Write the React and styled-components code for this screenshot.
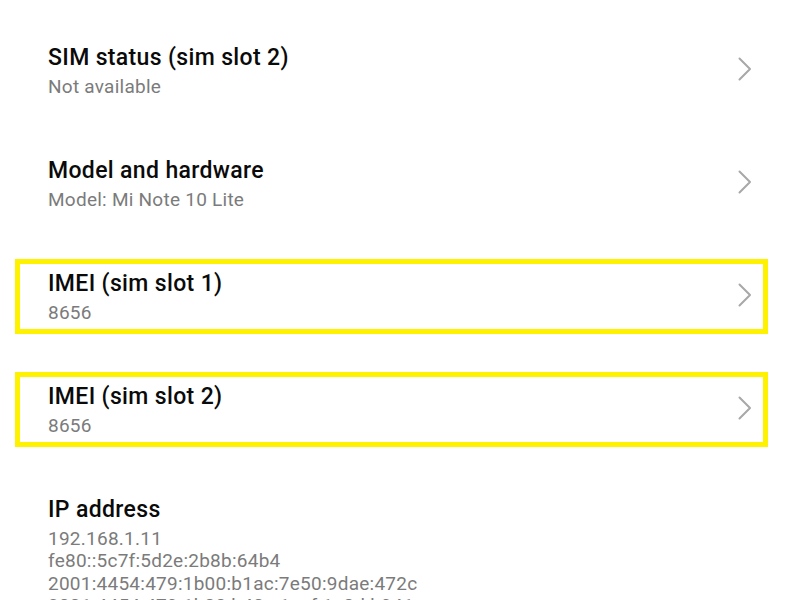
import React from 'react';
import styled, { createGlobalStyle } from 'styled-components';

const GlobalStyle = createGlobalStyle`
  html, body {
    margin: 0;
    padding: 0;
    background: #ffffff;
    font-family: Roboto, 'Noto Sans', Arial, sans-serif;
    -webkit-font-smoothing: antialiased;
  }
`;

const items = [
  { title: 'SIM status (sim slot 2)', lines: ['Not available'], arrow: true },
  { title: 'Model and hardware', lines: ['Model: Mi Note 10 Lite'], arrow: true },
  { title: 'IMEI (sim slot 1)', lines: ['8656'], arrow: true, marked: true },
  { title: 'IMEI (sim slot 2)', lines: ['8656'], arrow: true, marked: true },
  {
    title: 'IP address',
    lines: [
      '192.168.1.11',
      'fe80::5c7f:5d2e:2b8b:64b4',
      '2001:4454:479:1b00:b1ac:7e50:9dae:472c',
      '2001:4454:479:1b00:b40c:1ecf:1c0d:b941',
    ],
  },
];

const Chevron = () => (
  <svg width='14' height='24' viewBox='0 0 14 24'>
    <polyline
      points='1.5,1.5 12,12 1.5,22.5'
      fill='none'
      stroke='#a8a8a8'
      strokeWidth='2'
      strokeLinecap='round'
      strokeLinejoin='round'
    />
  </svg>
);

const App = () => {
  return (
    <>
      <GlobalStyle />
      <List>
        {items.map((item) => (
          <Row key={item.title}>
            <Item $marked={item.marked}>
              <Text>
                <Title>{item.title}</Title>
                <Sub>
                  {item.lines.map((line) => (
                    <div key={line}>{line}</div>
                  ))}
                </Sub>
              </Text>
              {item.arrow && (
                <Arrow>
                  <Chevron />
                </Arrow>
              )}
            </Item>
          </Row>
        ))}
      </List>
    </>
  );
};

const List = styled.div`
  width: 800px;
  height: 600px;
  overflow: hidden;
  padding-top: 14px;
  box-sizing: border-box;
`;

const Row = styled.div`
  padding: 19px 32px 19px 15px;
`;

const Item = styled.div`
  display: flex;
  align-items: center;
  border: 5px solid ${(p) => (p.$marked ? '#fff200' : 'transparent')};
  padding: 6px 11px 5px 28px;
`;

const Text = styled.div`
  flex: 1;
  min-width: 0;
`;

const Title = styled.div`
  font-size: 23px;
  font-weight: 500;
  line-height: 28px;
  letter-spacing: 0.35px;
  color: #0a0a0a;
`;

const Sub = styled.div`
  margin-top: 3.5px;
  font-size: 19px;
  line-height: 22.5px;
  letter-spacing: 0.25px;
  color: #7b7b7b;
`;

const Arrow = styled.div`
  display: flex;
  align-items: center;
  margin-top: -4px;
`;

export default App;
